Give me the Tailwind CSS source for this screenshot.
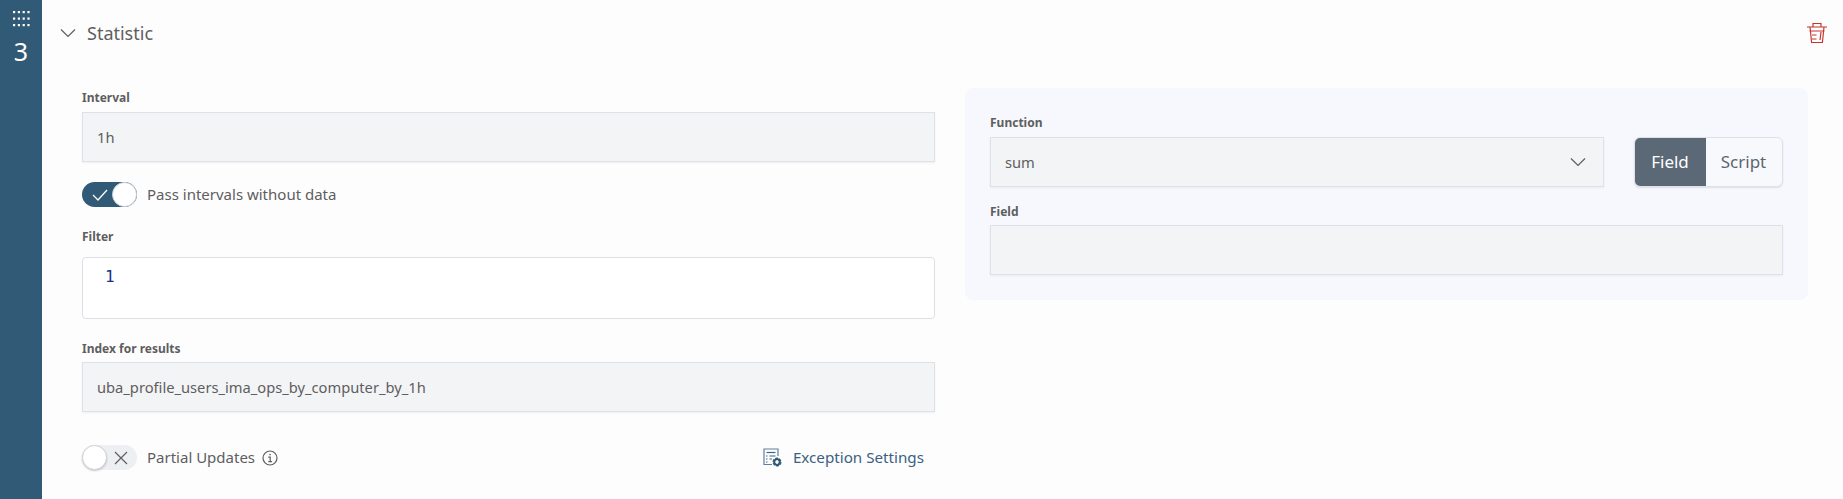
<!DOCTYPE html>
<html lang="en">
  <head>
    <meta charset="UTF-8" />
    <title>Statistic</title>
    <script src="https://cdn.jsdelivr.net/npm/@tailwindcss/browser@4"></script>
  </head>
  <body class="bg-[#fdfdfe] text-[#5e5e5e] font-['Noto_Sans',sans-serif] overflow-hidden">
    <div class="flex h-[499px]">
      <!-- step number rail -->
      <aside class="w-[42px] shrink-0 bg-[#315a76] flex flex-col items-center pt-[10px] text-white">
        <svg width="17" height="17" viewBox="0 0 17 17" fill="#fff">
          <rect x="0" y="1" width="2.2" height="2.2" /><rect x="4.8" y="1" width="2.2" height="2.2" /><rect x="9.6" y="1" width="2.2" height="2.2" /><rect x="14.4" y="1" width="2.2" height="2.2" />
          <rect x="0" y="7.5" width="2.2" height="2.2" /><rect x="4.8" y="7.5" width="2.2" height="2.2" /><rect x="9.6" y="7.5" width="2.2" height="2.2" /><rect x="14.4" y="7.5" width="2.2" height="2.2" />
          <rect x="0" y="14" width="2.2" height="2.2" /><rect x="4.8" y="14" width="2.2" height="2.2" /><rect x="9.6" y="14" width="2.2" height="2.2" /><rect x="14.4" y="14" width="2.2" height="2.2" />
        </svg>
        <span class="text-[25px] leading-[30px] mt-[9px]">3</span>
      </aside>

      <main class="flex-1 min-w-0 pr-[35px]">
        <header class="h-[88px] pl-[18px] flex items-start">
          <div class="flex items-center h-[66px] w-full">
            <svg width="16" height="10" viewBox="0 0 16 10" fill="none" stroke="#5e5e5e" stroke-width="1.2"><path d="M1 1.5l7 7 7-7" /></svg>
            <span class="ml-[11px] text-[18px] text-[#5e5e5e]">Statistic</span>
            <svg class="ml-auto mr-[-20px]" width="22" height="22" viewBox="0 0 22 22" fill="none" stroke="#c8352b" stroke-width="1.2">
              <path d="M1 5h20M7 5V1.5h8V5M3.5 9h15M4 5l1.6 15.5h10.8L18 5M6 13h4.5M6 17h4.5M15 10l-1 8" />
            </svg>
          </div>
        </header>

        <div class="grid grid-cols-[853px_843px] gap-x-[30px] pl-[40px]">
          <section>
            <label class="block text-[12px] leading-[18px] font-bold pt-[1px] mb-[5px]">Interval</label>
            <div class="h-[50px] bg-[#f3f4f6] border border-[#dfe1e8] shadow-[0_1px_2px_rgba(0,0,0,0.06)] flex items-center pl-[14px] text-[14.7px]">1h</div>

            <div class="flex items-center mt-[20px] h-[25px]">
              <div class="w-[55px] h-[25px] rounded-full bg-[#315a76] flex items-center justify-between pl-[10px] pr-0">
                <svg width="16" height="12" viewBox="0 0 16 12" fill="none" stroke="#fff" stroke-width="1.3"><path d="M1 6l5 5 9-10" /></svg>
                <span class="w-[25px] h-[25px] rounded-full bg-white border border-[#c9d3db]"></span>
              </div>
              <span class="ml-[10px] text-[15px]">Pass intervals without data</span>
            </div>

            <label class="block text-[12px] leading-[18px] font-bold mt-[21px] mb-[11px]">Filter</label>
            <div class="h-[62px] bg-white border border-[#dcdfe6] rounded-[4px] pl-[22px] pt-[7px] font-['DejaVu_Sans_Mono',monospace] text-[16px] leading-[24px] text-[#1b2f86]">1</div>

            <label class="block text-[12px] leading-[18px] font-bold mt-[21px] mb-[4px]">Index for results</label>
            <div class="h-[50px] bg-[#f3f4f6] border border-[#dfe1e8] shadow-[0_1px_2px_rgba(0,0,0,0.06)] flex items-center pl-[14px] text-[14.7px]">uba_profile_users_ima_ops_by_computer_by_1h</div>

            <div class="flex items-center mt-[33px] h-[25px]">
              <div class="w-[55px] h-[25px] rounded-full bg-[#eeeff3] flex items-center">
                <span class="w-[25px] h-[25px] rounded-full bg-white border border-[#cfd2d8] shadow-[0_1px_2px_rgba(0,0,0,0.2)]"></span>
                <svg class="ml-[7px]" width="14" height="14" viewBox="0 0 14 14" fill="none" stroke="#5e5e5e" stroke-width="1.2"><path d="M1 1l12 12M13 1L1 13" /></svg>
              </div>
              <span class="ml-[10px] text-[15px]">Partial Updates</span>
              <svg class="ml-[7px]" width="16" height="16" viewBox="0 0 16 16" fill="none" stroke="#5e5e5e" stroke-width="1.2">
                <circle cx="8" cy="8" r="7" /><path d="M6.3 7.2H8.2V11.6M6.3 11.6h3.8" /><circle cx="8" cy="4.6" r=".8" fill="#5e5e5e" stroke="none" />
              </svg>
              <div class="ml-auto mr-[11px] flex items-center text-[#3b6180]">
                <svg width="19" height="19" viewBox="0 0 19 19" fill="none" stroke="#5f80a0" stroke-width="1.2">
                  <path d="M9 16.5H1V1h14v7" /><path d="M3.5 4.5h9" stroke="#3f6583" /><path d="M3 8h1.5M6.5 8h6M3 11h1.5M6.5 11h2.5M3 14h1.5" stroke="#3f6583" />
                  <circle cx="14" cy="14" r="3.2" stroke="#2f5a76" stroke-width="2.6" stroke-dasharray="2.4 .9" />
                  <circle cx="14" cy="14" r="2.8" stroke="#2f5a76" stroke-width="1.8" />
                </svg>
                <span class="ml-[11px] text-[15.2px]">Exception Settings</span>
              </div>
            </div>
          </section>

          <section class="h-[212px] bg-[#f6f8fd] rounded-[8px] px-[25px] pt-[25px]">
            <label class="block text-[12px] leading-[18px] font-bold pt-[1px] mb-[5px]">Function</label>
            <div class="flex gap-x-[30px]">
              <div class="w-[614px] h-[50px] bg-[#f3f4f6] border border-[#dfe1e8] shadow-[0_1px_2px_rgba(0,0,0,0.06)] flex items-center justify-between pl-[14px] pr-[17px] text-[14.7px]">
                <span>sum</span>
                <svg width="16" height="10" viewBox="0 0 16 10" fill="none" stroke="#5e5e5e" stroke-width="1.2"><path d="M1 1.5l7 7 7-7" /></svg>
              </div>
              <div class="w-[149px] h-[50px] flex rounded-[6px] bg-[#f8f9fd] shadow-[0_1px_2px_rgba(0,0,0,0.1)] border border-[#dfe1e8] overflow-hidden text-[17px]">
                <span class="w-[72px] -m-px bg-[#5b6876] text-white flex items-center justify-center">Field</span>
                <span class="flex-1 flex items-center justify-center text-[#5d6670]">Script</span>
              </div>
            </div>
            <label class="block text-[12px] leading-[18px] font-bold mt-[16px] mb-[4px]">Field</label>
            <div class="h-[50px] bg-[#f3f4f6] border border-[#dfe1e8] shadow-[0_1px_2px_rgba(0,0,0,0.06)]"></div>
          </section>
        </div>
      </main>
    </div>
  </body>
</html>
